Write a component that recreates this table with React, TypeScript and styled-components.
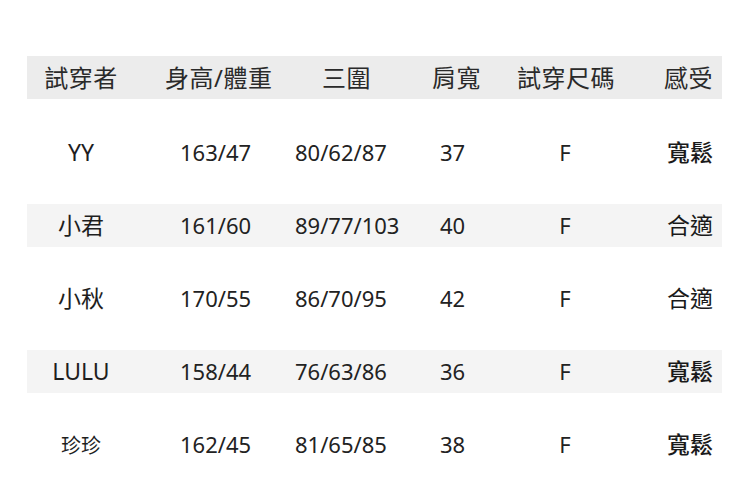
import React from 'react';
import styled, { createGlobalStyle } from 'styled-components';

const GlobalStyle = createGlobalStyle`
  html, body {
    margin: 0;
    padding: 0;
    background: #ffffff;
  }
  body {
    font-family: "Noto Sans", "Noto Sans CJK TC", sans-serif;
    color: #222222;
  }
`;

type Align = 'left' | 'center' | 'right';

type Column = {
    width: number
    headAlign: Align
    headPad: number
    cellAlign: Align
    cellPad: number
}

const columns: Column[] = [
    { width: 108, headAlign: 'center', headPad: 0, cellAlign: 'center', cellPad: 0 },
    { width: 155, headAlign: 'left', headPad: 30, cellAlign: 'left', cellPad: 45 },
    { width: 125, headAlign: 'left', headPad: 32, cellAlign: 'left', cellPad: 5 },
    { width: 85, headAlign: 'left', headPad: 17, cellAlign: 'left', cellPad: 25 },
    { width: 130, headAlign: 'left', headPad: 17, cellAlign: 'center', cellPad: 0 },
    { width: 92, headAlign: 'right', headPad: 9, cellAlign: 'right', cellPad: 9 },
];

const gridTemplate = columns.map(c => `${c.width}px`).join(' ');

const Page = styled.div`
    padding: 56px 0 0 27px;
`;

const Table = styled.div`
    width: 695px;
    display: flex;
    flex-direction: column;
    gap: 30px;
`;

const Row = styled.div<{ shade: 'head' | 'band' | 'none', first?: boolean }>`
    display: grid;
    grid-template-columns: ${gridTemplate};
    height: 43px;
    align-items: center;
    margin-top: ${props => props.first ? '2px' : '0'};
    background: ${props => props.shade === 'head' ? '#ececec' : props.shade === 'band' ? '#f4f4f4' : 'transparent'};
`;

const Cell = styled.div<{ align: Align, pad: number }>`
    text-align: ${props => props.align};
    padding-left: ${props => props.align === 'left' ? props.pad : 0}px;
    padding-right: ${props => props.align === 'right' ? props.pad : 0}px;
    white-space: nowrap;
    line-height: 43px;
`;

const HeadText = styled.span`
    font-size: 24px;
    color: #2a2a2a;
    letter-spacing: 0.5px;
`;

const NameText = styled.span<{ small?: boolean }>`
    font-size: ${props => props.small ? '20px' : '23px'};
    color: #1e1e1e;
    font-weight: 400;
`;

const NumText = styled.span`
    font-size: 22px;
    color: #222222;
`;

const FeelText = styled.span<{ loose: boolean }>`
    font-size: 23px;
    color: #1a1a1a;
    font-weight: ${props => props.loose ? 500 : 400};
`;

const headers = ['試穿者', '身高/體重', '三圍', '肩寬', '試穿尺碼', '感受'];

type Entry = {
    name: string
    small?: boolean
    body: string
    sizes: string
    shoulder: string
    size: string
    feel: string
}

const entries: Entry[] = [
    { name: 'YY', body: '163/47', sizes: '80/62/87', shoulder: '37', size: 'F', feel: '寬鬆' },
    { name: '小君', body: '161/60', sizes: '89/77/103', shoulder: '40', size: 'F', feel: '合適' },
    { name: '小秋', body: '170/55', sizes: '86/70/95', shoulder: '42', size: 'F', feel: '合適' },
    { name: 'LULU', body: '158/44', sizes: '76/63/86', shoulder: '36', size: 'F', feel: '寬鬆' },
    { name: '珍珍', small: true, body: '162/45', sizes: '81/65/85', shoulder: '38', size: 'F', feel: '寬鬆' },
];

export default function App() {
    return (
        <Page>
            <GlobalStyle />
            <Table>
                <Row shade="head">
                    {headers.map((h, i) => (
                        <Cell key={h} align={columns[i].headAlign} pad={columns[i].headPad}>
                            <HeadText>{h}</HeadText>
                        </Cell>
                    ))}
                </Row>
                {entries.map((e, r) => {
                    const cells = [
                        <NameText small={e.small}>{e.name}</NameText>,
                        <NumText>{e.body}</NumText>,
                        <NumText>{e.sizes}</NumText>,
                        <NumText>{e.shoulder}</NumText>,
                        <NumText>{e.size}</NumText>,
                        <FeelText loose={e.feel === '寬鬆'}>{e.feel}</FeelText>,
                    ];
                    return (
                        <Row key={e.name} shade={r % 2 === 1 ? 'band' : 'none'} first={r === 0}>
                            {cells.map((c, i) => (
                                <Cell key={i} align={columns[i].cellAlign} pad={columns[i].cellPad}>{c}</Cell>
                            ))}
                        </Row>
                    );
                })}
            </Table>
        </Page>
    );
}
